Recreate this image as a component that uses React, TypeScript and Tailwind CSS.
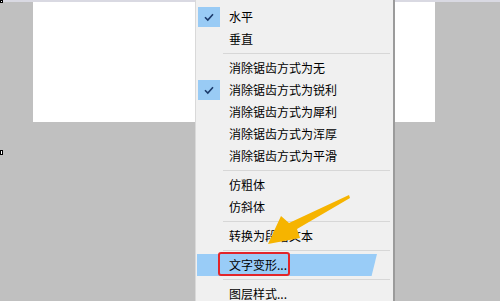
import React from "react";

type Row =
  | { kind: "item"; label: string; checked?: boolean; active?: boolean }
  | { kind: "sep" };

const rows: Row[] = [
  { kind: "item", label: "水平", checked: true },
  { kind: "item", label: "垂直" },
  { kind: "sep" },
  { kind: "item", label: "消除锯齿方式为无" },
  { kind: "item", label: "消除锯齿方式为锐利", checked: true },
  { kind: "item", label: "消除锯齿方式为犀利" },
  { kind: "item", label: "消除锯齿方式为浑厚" },
  { kind: "item", label: "消除锯齿方式为平滑" },
  { kind: "sep" },
  { kind: "item", label: "仿粗体" },
  { kind: "item", label: "仿斜体" },
  { kind: "sep" },
  { kind: "item", label: "转换为段落文本" },
  { kind: "sep" },
  { kind: "item", label: "文字变形...", active: true },
  { kind: "sep" },
  { kind: "item", label: "图层样式..." },
];

function Check() {
  return (
    <div className="w-[22px] h-[20px] bg-[#99cbf5] flex items-center justify-center">
      <svg width="12" height="10" viewBox="0 0 12 10" fill="none">
        <path d="M2 5.2 L4.8 8 L10 2.2" stroke="#1b3a6b" strokeWidth="1.6" />
      </svg>
    </div>
  );
}

function MenuRow({ row }: { row: Row }) {
  if (row.kind === "sep") {
    return (
      <div className="h-[7px] flex items-center pl-[27px] pr-[3px]">
        <div className="h-px w-full bg-[#d7d7d7]" />
      </div>
    );
  }
  return (
    <div className="relative h-[22px] flex items-center">
      {row.active && (
        <div
          className="absolute left-px top-0 h-[22px] w-[180px] bg-[#99ccf7]"
          style={{ clipPath: "polygon(0 0, 100% 0, 97% 100%, 0 100%)" }}
        />
      )}
      <div className="relative w-[33px] pl-[2px] flex items-center">
        {row.checked && <Check />}
      </div>
      <span className="relative text-[12px] leading-none text-black">{row.label}</span>
      {row.active && (
        <div className="absolute left-[22px] top-[-2px] w-[72px] h-[24px] border-2 border-[#e2252a] rounded-[3px]" />
      )}
    </div>
  );
}

export default function App() {
  return (
    <div
      className="relative w-[500px] h-[301px] overflow-hidden bg-[#c0c0c0]"
      style={{ fontFamily: '"Microsoft YaHei", "Noto Sans CJK SC", sans-serif' }}
    >
      <div className="h-[2px] bg-[#d9d9e2]" />
      <div className="ml-[33px] w-[402px] h-[120px] bg-white" />

      {/* canvas handles */}
      <div className="absolute left-0 top-0 w-[3px] h-[3px] border border-black bg-white" />
      <div className="absolute left-0 top-[150px] w-[3px] h-[5px] border border-black bg-white" />
      <div className="absolute left-[249px] top-0 w-[4px] h-[3px] border border-black bg-white" />

      {/* context menu */}
      <div className="absolute left-[195px] top-0 w-[198px] h-[301px] bg-[#f0f0f0] border-l border-[#d9d9d9] pt-[6px] shadow-[2px_0_0_#9b9b9b]">
        {rows.map((r, i) => (
          <MenuRow key={i} row={r} />
        ))}
      </div>

      {/* yellow arrow */}
      <svg className="absolute left-0 top-0" width="500" height="301" viewBox="0 0 500 301">
        <polygon
          points="349,195 350,198 297,229 300,238 268,244 281,216 289,223"
          fill="#f6b400"
        />
      </svg>
    </div>
  );
}
